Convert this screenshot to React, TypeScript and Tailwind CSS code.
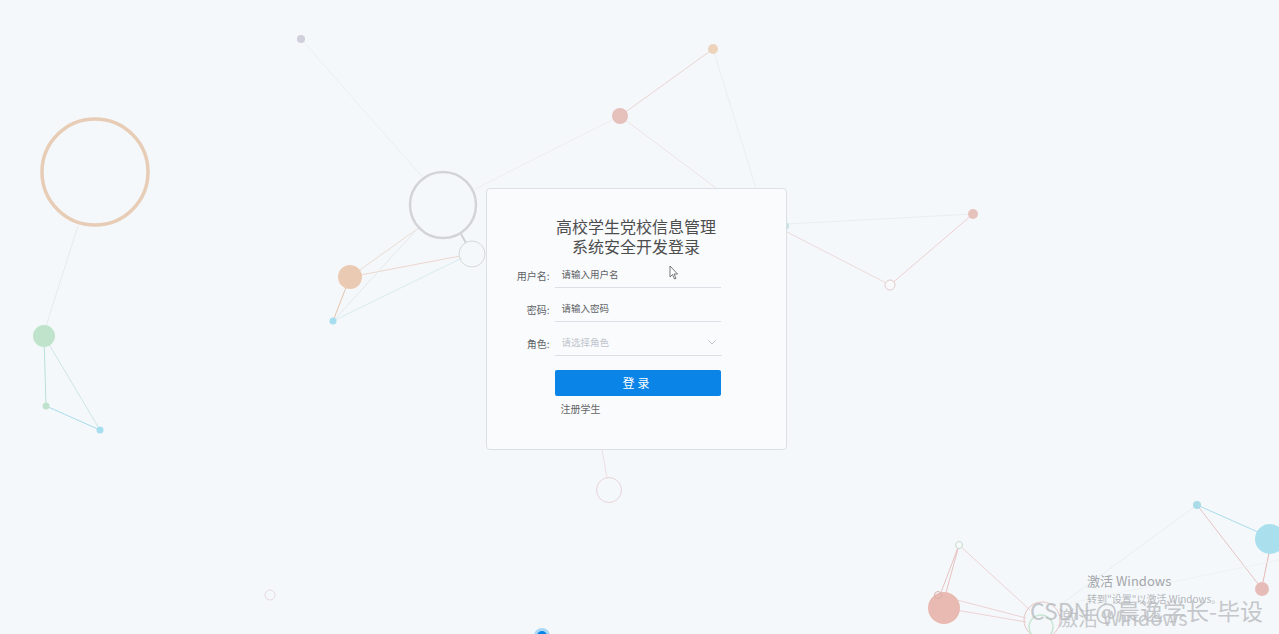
import React from "react";

const FONT = { fontFamily: "'Noto Sans CJK SC', 'Noto Sans', sans-serif" };

// background particle network, drawn as one svg layer
function Particles() {
  return (
    <svg className="absolute inset-0" width="1279" height="634" viewBox="0 0 1279 634">
      {/* lines */}
      <g strokeWidth="1" fill="none">
        <line x1="301" y1="39" x2="425" y2="180" stroke="#eceef1" />
        <line x1="78" y1="226" x2="46" y2="326" stroke="#e6eae8" />
        <line x1="44" y1="336" x2="46" y2="406" stroke="#b9e2d2" />
        <line x1="44" y1="336" x2="100" y2="430" stroke="#cde6e6" />
        <line x1="46" y1="406" x2="100" y2="430" stroke="#a7dcea" />
        <line x1="350" y1="277" x2="420" y2="227" stroke="#eadbd0" />
        <line x1="350" y1="277" x2="460" y2="256" stroke="#ecd7cf" />
        <line x1="333" y1="321" x2="350" y2="277" stroke="#e5c4ad" />
        <line x1="333" y1="321" x2="462" y2="258" stroke="#d8ecef" />
        <line x1="333" y1="321" x2="420" y2="226" stroke="#e4e8ea" />
        <line x1="461" y1="234" x2="466" y2="243" stroke="#cfd2d6" strokeWidth="2" />
        <line x1="475" y1="189" x2="612" y2="120" stroke="#eeecee" />
        <line x1="620" y1="116" x2="713" y2="49" stroke="#ecd3d3" />
        <line x1="620" y1="116" x2="716" y2="188" stroke="#eee4e4" />
        <line x1="713" y1="49" x2="756" y2="188" stroke="#eceff2" />
        <line x1="787" y1="232" x2="890" y2="285" stroke="#ecd9d9" />
        <line x1="890" y1="285" x2="973" y2="214" stroke="#ecd0d0" />
        <line x1="787" y1="224" x2="973" y2="214" stroke="#e8eff1" />
        <line x1="602" y1="450" x2="607" y2="478" stroke="#ecdfe2" />
        <line x1="959" y1="545" x2="944" y2="600" stroke="#e6c2c0" />
        <line x1="959" y1="545" x2="940" y2="595" stroke="#e6c2c0" />
        <line x1="959" y1="545" x2="1030" y2="610" stroke="#ecd2d2" />
        <line x1="938" y1="595" x2="1026" y2="618" stroke="#ecd2d2" />
        <line x1="944" y1="608" x2="1026" y2="622" stroke="#ecd2d2" />
        <line x1="1197" y1="505" x2="1258" y2="532" stroke="#a9dbe9" />
        <line x1="1197" y1="505" x2="1262" y2="589" stroke="#e5c4c4" />
        <line x1="1270" y1="548" x2="1263" y2="582" stroke="#e5b8b4" />
        <line x1="1197" y1="505" x2="1060" y2="605" stroke="#e8eef0" />
        <line x1="1060" y1="605" x2="1279" y2="560" stroke="#eef1f3" />
      </g>
      {/* nodes */}
      <circle cx="301" cy="39" r="4" fill="#cfd0dc" />
      <circle cx="95" cy="172" r="53" fill="none" stroke="#e8cdb6" strokeWidth="3.5" />
      <circle cx="44" cy="336" r="11" fill="#bfe4cb" />
      <circle cx="46" cy="406" r="3.5" fill="#bfe2cd" />
      <circle cx="100" cy="430" r="3.5" fill="#a6ddef" />
      <circle cx="443" cy="205" r="33" fill="none" stroke="#d2d4d8" strokeWidth="2.5" />
      <circle cx="472" cy="254" r="13" fill="none" stroke="#d6d8dc" strokeWidth="1" />
      <circle cx="350" cy="277" r="12" fill="#ebcab3" />
      <circle cx="333" cy="321" r="3.5" fill="#a6ddef" />
      <circle cx="620" cy="116" r="8" fill="#e6c0ba" />
      <circle cx="713" cy="49" r="5" fill="#edd3bc" />
      <circle cx="785" cy="226" r="4" fill="#c6e2e2" />
      <circle cx="890" cy="285" r="5" fill="#f7f9fb" stroke="#e3cccc" strokeWidth="1" />
      <circle cx="973" cy="214" r="5" fill="#e6c2bc" />
      <circle cx="609" cy="490" r="12.5" fill="none" stroke="#e8d3d6" strokeWidth="1" />
      <circle cx="270" cy="595" r="5" fill="none" stroke="#e8d8dc" strokeWidth="1" />
      <circle cx="542" cy="636" r="8" fill="#a9d7f7" />
      <circle cx="542" cy="636" r="5" fill="#0a84e6" />
      <circle cx="959" cy="545" r="3.5" fill="#f7f9fb" stroke="#c7dccf" strokeWidth="1" />
      <circle cx="944" cy="608" r="16" fill="#e8bab2" />
      <circle cx="938" cy="595" r="3.5" fill="none" stroke="#d9b0aa" strokeWidth="1" />
      <circle cx="1042" cy="620" r="18" fill="none" stroke="#e6c6c6" strokeWidth="1" />
      <circle cx="1041" cy="627" r="12" fill="none" stroke="#c7e6d3" strokeWidth="1.5" />
      <circle cx="1197" cy="505" r="4" fill="#a9dbe9" />
      <circle cx="1270" cy="539" r="15" fill="#aae0ee" />
      <circle cx="1262" cy="589" r="7" fill="#e6bcb8" />
    </svg>
  );
}

function Field({ label, placeholder, light, select }: { label: string; placeholder: string; light?: boolean; select?: boolean }) {
  return (
    <div className="flex items-center h-[26px]">
      <label className="w-[49px] text-right text-[10px] text-[#606266]">{label}:</label>
      <div className={`ml-[5px] h-[26px] flex items-center border-b border-[#dcdfe6] pl-[7px] pr-[6px] ${select ? "w-[167px]" : "w-[166px]"}`}>
        <span className={`flex-1 text-[9.5px] ${light ? "text-[#c0c4cc]" : "text-[#606266]"}`}>{placeholder}</span>
        {select && (
          <svg width="8" height="5" viewBox="0 0 8 5" fill="none" stroke="#c0c4cc" strokeWidth="1">
            <path d="M0.5 0.5 L4 4 L7.5 0.5" />
          </svg>
        )}
      </div>
    </div>
  );
}

export default function App() {
  return (
    <div className="relative w-full h-[634px] overflow-hidden bg-[#f5f8fb] flex items-center justify-center" style={FONT}>
      <Particles />

      <div className="relative w-[301px] h-[262px] mt-[4px] -ml-[7px] bg-[#f9fbfd] border border-[#dcdfe6] rounded-[4px] pt-[27px] pl-[14px]">
        <h1 className="text-center text-[16px] leading-[20px] text-[#4d4d4d] pr-[14px]">
          高校学生党校信息管理
          <br />
          系统安全开发登录
        </h1>

        <div className="mt-[6px] flex flex-col gap-[8px]">
          <Field label="用户名" placeholder="请输入用户名" />
          <Field label="密码" placeholder="请输入密码" />
          <Field label="角色" placeholder="请选择角色" light select />
        </div>

        <button className="mt-[14px] ml-[54px] w-[166px] h-[26px] rounded-[2px] bg-[#0a84e6] text-white text-[12px] tracking-[3px]">
          登录
        </button>

        <div className="mt-[5px] ml-[60px] text-[10px] text-[#666]">注册学生</div>
      </div>

      {/* mouse pointer */}
      <svg className="absolute left-[669px] top-[265px]" width="10" height="15" viewBox="0 0 10 15">
        <path d="M1 1 L1 12 L3.5 9.5 L5.5 14 L7 13.3 L5 9 L8.5 9 Z" fill="#fff" stroke="#555" strokeWidth="0.8" />
      </svg>

      {/* screen overlay texts */}
      <div className="absolute left-[1087px] top-[573px] text-[13px] text-[#a3a6aa] leading-[16px]">激活 Windows</div>
      <div className="absolute left-[1087px] top-[593px] text-[10px] text-[#b3b6ba] leading-[12px]">转到"设置"以激活 Windows。</div>
      <div className="absolute left-[1058px] top-[606px] text-[20px] text-[#c6c8cc] leading-[24px]">激活 Windows</div>
      <div className="absolute left-[1030px] top-[596px] text-[23px] text-[#b9bbbf] leading-[28px] opacity-80 whitespace-nowrap">CSDN @晨逸学长-毕设</div>
    </div>
  );
}
